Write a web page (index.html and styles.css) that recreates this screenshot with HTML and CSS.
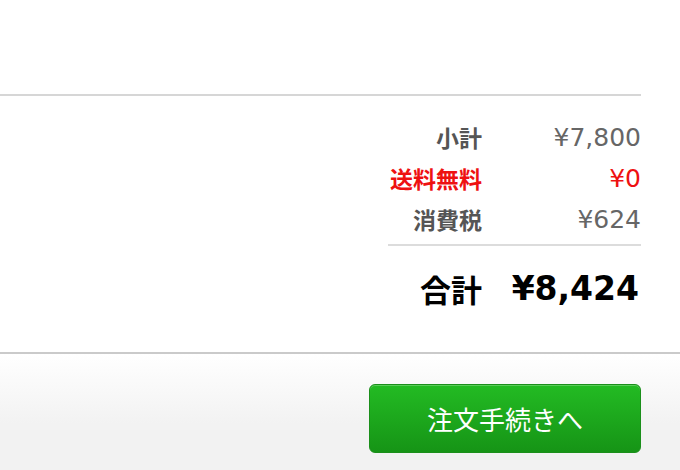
FILE: index.html
```html
<!DOCTYPE html>
<html lang="ja">
<head>
    <meta charset="UTF-8">
    <meta name="viewport" content="width=device-width, initial-scale=1.0">
    <title>カート</title>
    <link rel="stylesheet" href="styles.css">
</head>
<body>
    <!-- Cart items area (scrolled past) -->
    <div class="cart-items"></div>

    <!-- Order summary -->
    <div class="summary">
        <div class="summary-box">
            <div class="row">
                <span class="label">小計</span>
                <span class="value">¥7,800</span>
            </div>
            <div class="row free">
                <span class="label">送料無料</span>
                <span class="value">¥0</span>
            </div>
            <div class="row">
                <span class="label">消費税</span>
                <span class="value">¥624</span>
            </div>
            <div class="row total">
                <span class="label">合計</span>
                <span class="value">¥8,424</span>
            </div>
        </div>
    </div>

    <!-- Checkout -->
    <div class="checkout">
        <button class="checkout-button">注文手続きへ</button>
    </div>
</body>
</html>
```

FILE: styles.css
```css
body {
    margin: 0;
    font-family: "DejaVu Sans", "Noto Sans CJK JP", sans-serif;
    background-color: #fff;
}

.cart-items {
    height: 94px;
    margin-right: 39px;
    border-bottom: 2px solid #d6d6d6;
}

.summary {
    padding: 21px 39px 0 0;
    border-bottom: 2px solid #cacaca;
}

.summary-box {
    width: 253px;
    margin-left: auto;
}

.row {
    display: grid;
    grid-template-columns: 94px 1fr;
    line-height: 41px;
    text-align: right;
    color: #666;
    font-size: 25px;
}

.row .label {
    font-family: "Noto Sans CJK JP", sans-serif;
    font-weight: bold;
    font-size: 23px;
    color: #555;
}

.row.free .label,
.row.free .value {
    color: #ee1111;
}

.row.total {
    margin-top: 4px;
    padding: 18px 0 38px;
    border-top: 2px solid #dcdcdc;
    line-height: 50px;
    color: #000;
    font-weight: bold;
    font-size: 33px;
}

.row.total .label {
    font-size: 31px;
    color: #000;
}

.row.total .value {
    padding-right: 2px;
}

.checkout {
    height: 116px;
    padding: 30px 39px 0 0;
    box-sizing: border-box;
    background: linear-gradient(#fff, #f2f2f2 60%);
    display: flex;
    justify-content: flex-end;
    align-items: flex-start;
}

.checkout-button {
    width: 272px;
    height: 69px;
    border: 1px solid #1b8f1b;
    border-radius: 6px;
    background: linear-gradient(#23bb23, #169416);
    box-shadow: inset 0 1px 0 rgba(255, 255, 255, 0.25);
    color: #fff;
    font-family: "Noto Sans CJK JP", sans-serif;
    font-size: 26px;
    cursor: pointer;
}
```
